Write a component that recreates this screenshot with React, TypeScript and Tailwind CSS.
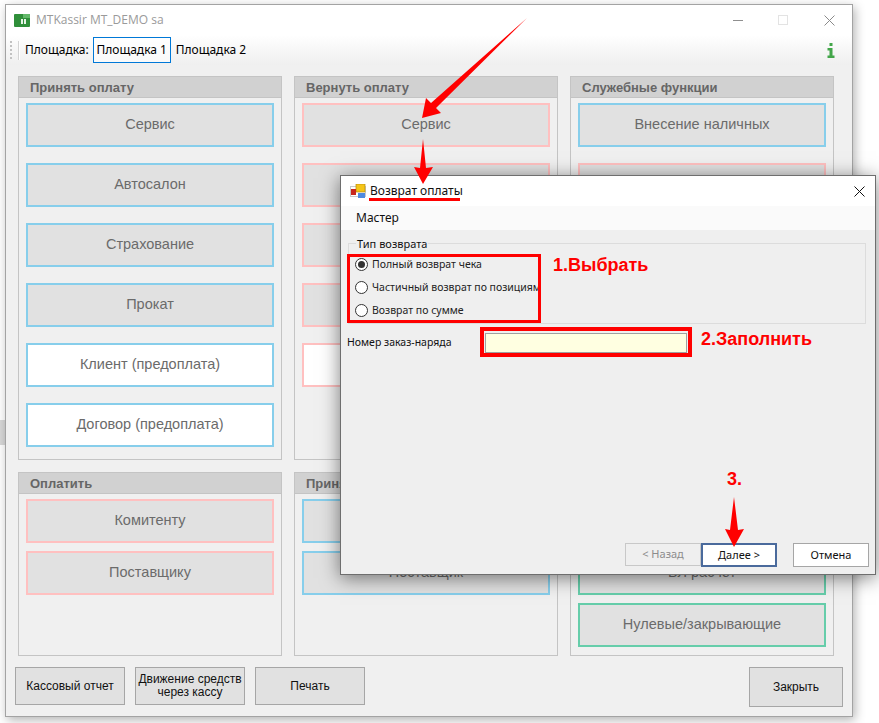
import type { ReactNode } from "react";

type Tone = "blue" | "pink" | "green";

interface TileProps {
  label?: string;
  tone: Tone;
  light?: boolean;
}

const toneClass: Record<Tone, string> = {
  blue: "border-[#87ceeb]",
  pink: "border-[#ffc0c0]",
  green: "border-[#66cdaa]",
};

function Tile({ label, tone, light = false }: TileProps) {
  return (
    <div
      className={`h-11 w-full flex items-center justify-center border-2 text-[14.5px] text-[#6b6b6b] ${toneClass[tone]} ${
        light ? "bg-white" : "bg-[#e1e1e1]"
      }`}
    >
      {label}
    </div>
  );
}

function Group({ title, gap, children }: { title: string; gap: string; children: ReactNode }) {
  return (
    <div className="flex flex-col border border-[#c4c4c4]">
      <div className="h-[21px] bg-[#d1d1d1] border-b border-[#c4c4c4] pl-[11px] text-[13px] leading-[21px] font-bold text-[#666666]">
        {title}
      </div>
      <div className={`flex flex-col px-[7px] pt-[5px] ${gap}`}>{children}</div>
    </div>
  );
}

function BottomButton({ children, className = "" }: { children: ReactNode; className?: string }) {
  return (
    <div
      className={`flex items-center justify-center text-center border border-[#a6a6a6] bg-[#e1e1e1] text-[12px] leading-[13px] text-[#111111] ${className}`}
    >
      {children}
    </div>
  );
}

function Radio({ label, checked = false }: { label: string; checked?: boolean }) {
  return (
    <div className="h-[23px] flex items-center gap-[4px] pl-[6px]">
      <div className="w-[13px] h-[13px] rounded-full border border-[#333333] bg-white flex items-center justify-center">
        {checked && <div className="w-[7px] h-[7px] rounded-full bg-[#333333]" />}
      </div>
      <span className="text-[10.5px] text-[#222222] whitespace-nowrap">{label}</span>
    </div>
  );
}

function AppIcon() {
  return (
    <svg width="16" height="13" viewBox="0 0 16 13">
      <rect width="16" height="13" rx="1" fill="#2f8f3a" />
      <path d="M9 0h7v4H9z" fill="#63b96a" />
      <rect x="7" y="5" width="5" height="5" fill="#e6f4e6" />
      <rect x="9" y="5" width="1" height="5" fill="#2f8f3a" />
    </svg>
  );
}

function DialogIcon() {
  return (
    <svg width="16" height="15" viewBox="0 0 16 15">
      <rect x="0.5" y="2.5" width="15" height="10" fill="none" stroke="#c9c9c9" />
      <rect x="6" y="0" width="9" height="8" fill="#f5c518" stroke="#b58a10" strokeWidth="0.7" />
      <rect x="1" y="5" width="5" height="6" fill="#c8281e" />
      <rect x="8" y="9" width="7" height="5" fill="#4f8ae0" />
    </svg>
  );
}

function Annotations() {
  return (
    <svg className="absolute left-0 top-0 pointer-events-none" width="879" height="723" viewBox="0 0 879 723">
      <g fill="#ff0000">
        <path d="M527 18 L436 108 L441 113 L422 118 L426 98 L431 103 Z" />
        <path d="M423 139 L426 168 L433 167 L423 184 L414 167 L420 168 Z" />
        <path d="M734 497 L738 530 L744 529 L734 547 L725 529 L730 530 Z" />
        <rect x="369" y="198" width="91" height="3" />
      </g>
      <rect x="348.5" y="255.5" width="191" height="66" fill="none" stroke="#ff0000" strokeWidth="3" />
      <rect x="482" y="329" width="208" height="26" fill="none" stroke="#ff0000" strokeWidth="4" />
    </svg>
  );
}

export default function App() {
  return (
    <div className="relative w-[879px] h-[723px] bg-white overflow-hidden font-['Liberation_Sans',Arial,sans-serif]">
      <div className="absolute left-0 top-[420px] w-[6px] h-[25px] bg-[#d8d8d8]" />

      {/* Main window */}
      <div className="absolute left-[5px] top-[4px] w-[848px] h-[713px] flex flex-col border border-[#a3a3a3] bg-[#f0f0f0] shadow-[2px_3px_10px_rgba(0,0,0,0.3)]">
        <div className="h-[30px] shrink-0 bg-white flex items-center pl-[8px]">
          <AppIcon />
          <span className="ml-[6px] text-[12px] text-[#9a9a9a] font-['Open_Sans',sans-serif]">MTKassir MT_DEMO sa</span>
          <div className="ml-auto flex items-center">
            <div className="w-[10px] h-px bg-[#8f8f8f]" />
            <div className="ml-[35px] w-[10px] h-[10px] border border-[#e3e3e3]" />
            <svg className="ml-[36px] mr-[17px]" width="11" height="11" viewBox="0 0 11 11">
              <path d="M0.5 0.5L10.5 10.5M10.5 0.5L0.5 10.5" stroke="#8a8a8a" strokeWidth="1" fill="none" />
            </svg>
          </div>
        </div>

        <div className="h-[30px] shrink-0 bg-gradient-to-b from-white to-[#efefef] flex items-center pl-[4px] text-[12px] text-black font-['Noto_Sans',sans-serif]">
          <div className="w-[2px] h-[18px] border-l-2 border-dotted border-[#c2c2c2]" />
          <div className="ml-[6px] w-[2px] h-[19px] bg-[#d4d4d4] border-r border-white" />
          <span className="ml-[5px]">Площадка:</span>
          <div className="ml-[4px] w-[78px] h-[26px] flex items-center justify-center border border-[#0078d7] bg-white/60">Площадка 1</div>
          <span className="ml-[5px]">Площадка 2</span>
          <svg className="ml-auto mr-[17px]" width="8" height="15" viewBox="0 0 8 15">
            <path d="M2.5 0h3v3h-3zM0.5 5h5v7.5h2V15H0.5v-2.5h2V7.5h-2z" fill="#43a64a" />
          </svg>
        </div>

        <div className="grid grid-cols-[264px_264px_264px] grid-rows-[384px_184px] gap-3 pl-[12px] pt-[11px]">
          <Group title="Принять оплату" gap="gap-4">
            <Tile label="Сервис" tone="blue" />
            <Tile label="Автосалон" tone="blue" />
            <Tile label="Страхование" tone="blue" />
            <Tile label="Прокат" tone="blue" />
            <Tile label="Клиент (предоплата)" tone="blue" light />
            <Tile label="Договор (предоплата)" tone="blue" light />
          </Group>
          <Group title="Вернуть оплату" gap="gap-4">
            <Tile label="Сервис" tone="pink" />
            <Tile tone="pink" />
            <Tile tone="pink" />
            <Tile tone="pink" />
            <Tile tone="pink" light />
          </Group>
          <Group title="Служебные функции" gap="gap-4">
            <Tile label="Внесение наличных" tone="blue" />
            <Tile tone="pink" />
          </Group>
          <Group title="Оплатить" gap="gap-2">
            <Tile label="Комитенту" tone="pink" />
            <Tile label="Поставщику" tone="pink" />
          </Group>
          <Group title="Принять" gap="gap-2">
            <Tile tone="blue" />
            <Tile label="Поставщик" tone="blue" />
          </Group>
          <Group title="Чеки" gap="gap-2">
            <Tile tone="green" />
            <Tile label="БЛ расчет" tone="green" />
            <Tile label="Нулевые/закрывающие" tone="green" />
          </Group>
        </div>

        <div className="flex items-start pl-[9px] pr-[9px] mt-[11px]">
          <div className="flex gap-[10px]">
            <BottomButton className="w-[110px] h-[38px]">Кассовый отчет</BottomButton>
            <BottomButton className="w-[110px] h-[38px]">
              Движение средств
              <br />
              через кассу
            </BottomButton>
            <BottomButton className="w-[110px] h-[38px]">Печать</BottomButton>
          </div>
          <BottomButton className="ml-auto w-[94px] h-[40px]">Закрыть</BottomButton>
        </div>
      </div>

      {/* Dialog */}
      <div className="absolute left-[340px] top-[175px] w-[536px] h-[400px] flex flex-col border border-[#6e6e6e] bg-[#efefef] shadow-[0_3px_18px_rgba(0,0,0,0.5)] text-[#111111] font-['Noto_Sans',sans-serif]">
        <div className="h-[30px] shrink-0 bg-white flex items-center pl-[9px] text-[12px]">
          <DialogIcon />
          <span className="ml-[4px]">Возврат оплаты</span>
          <svg className="ml-auto mr-[10px]" width="11" height="11" viewBox="0 0 11 11">
            <path d="M0.5 0.5L10.5 10.5M10.5 0.5L0.5 10.5" stroke="#111111" strokeWidth="1" fill="none" />
          </svg>
        </div>
        <div className="h-[24px] shrink-0 bg-[#fafafa] flex items-center pl-[15px] text-[12px]">Мастер</div>

        <div className="flex-1 flex flex-col pl-[7px] pr-[9px] pt-[13px] pb-[7px]">
          <div className="relative h-[81px] border border-[#dcdcdc] pt-[9px]">
            <span className="absolute left-[7px] top-[-7px] bg-[#efefef] px-px text-[11px] leading-[14px]">Тип возврата</span>
            <Radio label="Полный возврат чека" checked />
            <Radio label="Частичный возврат по позициям" />
            <Radio label="Возврат по сумме" />
          </div>
          <div className="flex items-center mt-[9px]">
            <span className="w-[138px] shrink-0 -ml-px text-[10.5px]">Номер заказ-наряда</span>
            <div className="w-[202px] h-[20px] border border-[#a0a0a0] bg-[#ffffe1]" />
          </div>
          <div className="mt-auto flex justify-end text-[11px] mr-[-3px]">
            <div className="w-[76px] h-[23px] flex items-center justify-center border border-[#c8c8c8] text-[#8c8c8c]">&lt; Назад</div>
            <div className="w-[76px] h-[24px] flex items-center justify-center border-2 border-[#4a6a9c] bg-white">Далее &gt;</div>
            <div className="ml-[16px] w-[76px] h-[24px] flex items-center justify-center border border-[#a6a6a6] bg-white">Отмена</div>
          </div>
        </div>
      </div>

      <Annotations />
      <span className="absolute left-[553px] top-[254px] text-[18px] leading-[22px] font-bold text-[#ff0000]">1.Выбрать</span>
      <span className="absolute left-[701px] top-[328px] text-[18px] leading-[22px] font-bold text-[#ff0000]">2.Заполнить</span>
      <span className="absolute left-[727px] top-[468px] text-[18px] leading-[22px] font-bold text-[#ff0000]">3.</span>
    </div>
  );
}
